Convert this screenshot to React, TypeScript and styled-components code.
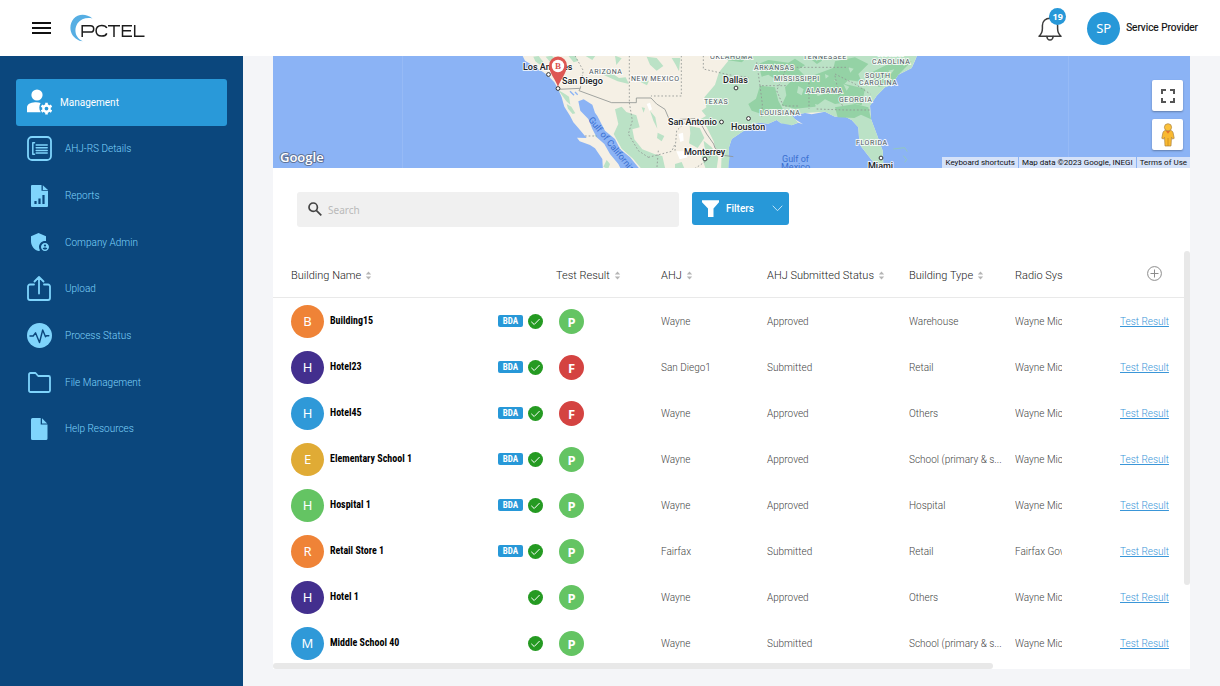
import React from 'react';
import styled, { createGlobalStyle } from 'styled-components';
import { MdAdminPanelSettings } from 'react-icons/md';

const sans = `Roboto, "Liberation Sans", sans-serif`;
const humanist = `"Noto Sans", "Open Sans", sans-serif`;
const narrow = `"Liberation Sans Narrow", "Roboto Condensed", "Liberation Sans", sans-serif`;

const GlobalStyle = createGlobalStyle`
  *, *::before, *::after { box-sizing: border-box; }
  body { margin: 0; background: #f4f5f8; font-family: ${sans}; font-size: 10px; color: #333; }
  button, input { font: inherit; }
  button { border: 0; padding: 0; cursor: pointer; background: none; color: inherit; }
`;

const Page = styled.div`
  display: flex;
  flex-direction: column;
  height: 100vh;
`;

/* ---------- header ---------- */

const Header = styled.header`
  flex: none;
  display: flex;
  align-items: center;
  height: 56px;
  padding: 0 22px 0 32px;
  background: #fff;
`;

const MenuButton = styled.button`
  display: flex;
  margin-right: 19px;
`;

const Logo = styled.a`
  display: flex;
  margin-right: auto;
`;

const BellButton = styled.button`
  position: relative;
  display: flex;
  margin-right: 25px;
`;

const Count = styled.span`
  position: absolute;
  top: -7px;
  right: -4px;
  width: 17px;
  height: 17px;
  border-radius: 50%;
  background: #2798d8;
  color: #fff;
  font: 700 9px/17px ${humanist};
  text-align: center;
`;

const Account = styled.button`
  display: flex;
  align-items: center;
  gap: 6px;
  color: #111;
  font: 400 10px/14px ${sans};
  -webkit-text-stroke: 0.2px #111;
`;

const Avatar = styled.span<{ $color: string }>`
  flex: none;
  width: 33px;
  height: 33px;
  border-radius: 50%;
  background: ${(p) => p.$color};
  color: #fff;
  font: 400 13px/33px ${humanist};
  text-align: center;
  -webkit-text-stroke: 0;
`;

/* ---------- sidebar ---------- */

const Body = styled.div`
  flex: 1;
  display: flex;
  min-height: 0;
`;

const Sidebar = styled.aside`
  flex: none;
  width: 243px;
  padding: 23px 16px;
  background: #0b477d;
`;

const Nav = styled.nav`
  display: grid;
  grid-auto-rows: 1fr;
  height: 373px;
`;

const NavItem = styled.a<{ $active?: boolean }>`
  display: flex;
  align-items: center;
  gap: ${(p) => (p.$active ? 8 : 13)}px;
  padding-left: 11px;
  border-radius: 3px;
  background: ${(p) => (p.$active ? '#2999d9' : 'transparent')};
  color: ${(p) => (p.$active ? '#fff' : '#7fd4fc')};
  font-size: 10px;
  font-weight: ${(p) => (p.$active ? 400 : 300)};
  text-decoration: none;
`;

const NavIcon = styled.span`
  display: flex;
  justify-content: center;
  width: 25px;
  color: ${'inherit'};
`;

/* ---------- content ---------- */

const Main = styled.main`
  flex: 1;
  min-width: 0;
  padding: 0 30px 17px;
`;

const Card = styled.section`
  display: flex;
  flex-direction: column;
  height: 100%;
  background: #fff;
`;

const MapBox = styled.div`
  flex: none;
  position: relative;
  height: 112px;
  overflow: hidden;
  background: #8bb3f5;
`;

const MapControls = styled.div`
  position: absolute;
  top: 24px;
  right: 7px;
  display: flex;
  flex-direction: column;
  gap: 8px;
`;

const MapButton = styled.button`
  display: flex;
  align-items: center;
  justify-content: center;
  width: 31px;
  height: 31px;
  border-radius: 2px;
  background: #fff;
  box-shadow: 0 1px 2px rgba(0, 0, 0, 0.3);
`;

const MapLegal = styled.div`
  position: absolute;
  right: 0;
  bottom: 0;
  display: flex;
  gap: 1px;
  height: 11px;
  color: #111;
  font: 400 8px/11px ${sans};
`;

const LegalText = styled.span`
  padding: 0 3px;
  background: #d5e2f9;
`;

const LegalButton = styled(LegalText).attrs({ as: 'button', type: 'button' })`
  line-height: 11px;
`;

const LegalLink = styled(LegalText).attrs({ as: 'a', href: '#terms' })`
  color: inherit;
  text-decoration: none;
`;

const Toolbar = styled.div`
  flex: none;
  display: flex;
  gap: 13px;
  height: 83px;
  padding: 24px 24px 0;
`;

const SearchBox = styled.label`
  flex: 0 1 382px;
  display: flex;
  align-items: center;
  gap: 6px;
  height: 35px;
  padding: 0 11px;
  border-radius: 3px;
  background: #f0f0f0;
`;

const SearchInput = styled.input`
  flex: 1;
  min-width: 0;
  border: 0;
  outline: 0;
  padding: 0;
  background: none;
  font: 400 10px/14px ${humanist};
  &::placeholder { color: #b9b9b9; opacity: 1; }
`;

const FilterButton = styled.button`
  display: flex;
  align-items: center;
  width: 97px;
  height: 33px;
  padding: 0 6px 0 10px;
  border-radius: 3px;
  background: #2798d8;
  color: #fff;
  font: 500 10px/14px ${sans};
`;

const FilterLabel = styled.span`
  flex: 1;
  padding-left: 7px;
  text-align: left;
`;

/* ---------- table ---------- */

const TableArea = styled.div`
  flex: 1;
  min-height: 0;
  display: grid;
  grid-template: minmax(0, 1fr) 6px / minmax(0, 1fr) 6px;
`;

const TableView = styled.div`
  overflow: hidden;
`;

const Thumb = styled.div`
  border-radius: 3px;
  background: #e8e8e8;
`;

const VThumb = styled(Thumb)`
  height: 81%;
`;

const HThumb = styled(Thumb)`
  width: 79%;
`;

const Table = styled.table`
  width: 100%;
  table-layout: fixed;
  border-spacing: 0;
`;

const Col = styled.col<{ $w?: number }>`
  width: ${(p) => (p.$w ? `${p.$w}px` : 'auto')};
`;

const Th = styled.th<{ $first?: boolean }>`
  height: 47px;
  padding: 2px 0 0 ${(p) => (p.$first ? 18 : 0)}px;
  border-bottom: 1px solid #e9e9e9;
  color: #222;
  font-size: 11px;
  font-weight: 300;
  text-align: left;
  white-space: nowrap;
`;

const SortButton = styled.button`
  display: flex;
  align-items: center;
  gap: 4px;
`;

const AddCell = styled.div`
  display: flex;
  padding-left: 27px;
`;

const Td = styled.td<{ $first?: boolean; $inset?: number; $clip?: number }>`
  height: 46px;
  padding: 0 ${(p) => p.$clip || 0}px 0 ${(p) => (p.$first ? 18 : p.$inset || 0)}px;
  color: #444;
  font-size: 10px;
  font-weight: 300;
  white-space: nowrap;
`;

const Clip = styled.div`
  overflow: hidden;
`;

const NameCell = styled.div`
  display: flex;
  align-items: center;
  padding-right: 13px;
`;

const BuildingName = styled.span`
  flex: 1;
  padding-left: 6px;
  color: #000;
  font: 700 10px/14px ${narrow};
`;

const Bda = styled.span`
  width: 25px;
  height: 12px;
  margin-right: 5px;
  border-radius: 2px;
  background: #2798d8;
  color: #fff;
  font: 700 9px/12px ${narrow};
  text-align: center;
`;

const Result = styled.span<{ $pass: boolean }>`
  display: block;
  width: 25px;
  height: 25px;
  border-radius: 50%;
  background: ${(p) => (p.$pass ? '#64c463' : '#d44341')};
  color: #fff;
  font: 700 13px/26px ${humanist};
  text-align: center;
`;

const ResultLink = styled.a`
  color: #3a96d8;
  text-decoration: underline;
`;

/* ---------- icons ---------- */

const svgLine = { fill: 'none', stroke: 'currentColor', strokeLinecap: 'round', strokeLinejoin: 'round' } as const;

const UserGearIcon = () => (
  <svg width="25" height="26" viewBox="0 0 25 26" fill="currentColor">
    <circle cx="10" cy="6" r="5.6" />
    <path d="M0 23.2v-4.4c0-3.4 3.2-5.3 8-5.5 2.200-.1 4 .1 5.600.6-1.600 2.700-1.900 6.300.2 9.300z" />
    <circle cx="19.500" cy="19.600" r="3.100" fill="none" stroke="currentColor" strokeWidth="2.400" />
    <path
      d="M19.500 13.800v2.200M19.500 23.200v2.200M14.500 16.700l1.900 1.100M22.600 21.400l1.900 1.100M14.500 22.500l1.900-1.100M22.600 17.800l1.900-1.100"
      stroke="currentColor"
      strokeWidth="2.600"
    />
  </svg>
);

const DetailsIcon = () => (
  <svg width="25" height="25" viewBox="0 0 25 25" {...svgLine} strokeWidth="1.800">
    <rect x="1" y="1" width="23" height="23" rx="4" />
    <path d="M7.500 6.700H5.800v11.500h1.700M9.200 9h11M9.200 11.700h11M9.200 14.400h11M9.200 17h11" strokeWidth="1.500" />
  </svg>
);

const ReportIcon = () => (
  <svg width="17" height="22" viewBox="0 0 17 22">
    <path d="M0 1a1 1 0 0 1 1-1h9.500v5.800H17V21a1 1 0 0 1-1 1H1a1 1 0 0 1-1-1z" fill="#7fd4fc" />
    <path d="M11.800.2 17 5h-5.200z" fill="#7fd4fc" />
    <path d="M4.500 19v-3M8.500 19v-5.500M12.500 19v-9" stroke="#0b477d" strokeWidth="2.200" />
  </svg>
);

const UploadIcon = () => (
  <svg width="25" height="25" viewBox="0 0 25 25" {...svgLine} strokeWidth="1.800">
    <path d="M7 8.500H3a2 2 0 0 0-2 2V22a2 2 0 0 0 2 2h18a2 2 0 0 0 2-2V10.500a2 2 0 0 0-2-2h-4M12 17.500V1.500M7.500 5.500 12 1l4.500 4.500" />
  </svg>
);

const PulseIcon = () => (
  <svg width="25" height="25" viewBox="0 0 25 25" fill="none">
    <circle cx="12.500" cy="12.500" r="12.500" fill="#7fd4fc" />
    <path
      d="M3 13h3.200l2.300-3.200 4 9.700 3.200-12.500 2.800 6.800 1-1h2.300"
      stroke="#0b477d"
      strokeWidth="1.400"
      strokeLinecap="round"
      strokeLinejoin="round"
    />
  </svg>
);

const FolderIcon = () => (
  <svg width="23" height="21" viewBox="0 0 23 21" {...svgLine} strokeWidth="1.800">
    <path d="M1 2.500A1.500 1.500 0 0 1 2.500 1h5L10.200 4h10.300A1.500 1.500 0 0 1 22 5.500v13a1.500 1.500 0 0 1-1.500 1.500h-18A1.500 1.500 0 0 1 1 18.500z" />
  </svg>
);

const FileIcon = () => (
  <svg width="17" height="22" viewBox="0 0 17 22" fill="currentColor">
    <path d="M0 1.500A1.500 1.500 0 0 1 1.500 0h8.200v6.500H16.500v14a1.500 1.500 0 0 1-1.500 1.500H1.500A1.500 1.500 0 0 1 0 20.500z" />
    <path d="M11 .2 16.200 5.500H11z" />
  </svg>
);

const MenuIcon = () => (
  <svg width="19" height="14" viewBox="0 0 19 14" stroke="#111" strokeWidth="2">
    <path d="M0 2h19M0 7h19M0 12h19" />
  </svg>
);

const PctelLogo = () => (
  <svg width="76" height="30" viewBox="0 0 76 30">
    <path d="M22.500 5.400C16 .2 8 .6 3.600 5.800-1.900 12.600-.6 23.500 9.500 27.700l3.200.6C5 24.400 3.600 16.600 7.600 10.300 11 5.600 16.500 4.200 22.500 5.400z" fill="#56aee3" />
    <g fill="none" stroke="#1c1c1c" strokeWidth="1.500">
      <path d="M12.200 24V12.700h8.200q3.300 0 3.300 3.200t-3.300 3.200h-8.200" />
      <path d="M36.800 15q-1.100-2.500-5-2.500-5.700 0-5.700 5.300t5.700 5.300q3.900 0 5-2.700" />
      <path d="M38 12.700h12M44 12.700V24M62 12.700h-9.500v10.500H62M52.500 17.800H61M64.700 12v11.200h9.800" />
    </g>
  </svg>
);

const BellIcon = () => (
  <svg width="24" height="26" viewBox="0 0 24 26" {...svgLine} stroke="#3c3c3c" strokeWidth="1.500">
    <path d="M1 21.200c2.600-2.200 3.400-4.200 3.400-7.700v-3C4.400 6.200 7.500 3.200 12 3.200s7.600 3 7.600 7.300v3c0 3.500.8 5.500 3.400 7.700z" />
    <path d="M12 3.200V1.200M8.800 21.500c.3 2.200 1.400 3.500 3.200 3.500s2.900-1.300 3.200-3.500" />
  </svg>
);

const SearchIcon = () => (
  <svg width="14" height="16" viewBox="0 0 14 16" fill="none" stroke="#444" strokeWidth="1.700">
    <circle cx="5.200" cy="5.200" r="4.200" />
    <path d="m8.300 8.300 5 5" />
  </svg>
);

const FunnelIcon = () => (
  <svg width="17" height="18" viewBox="0 0 17 18" fill="#fff">
    <path d="M0 .300h17v2L11.500 8.500v8.500H6V8.500L0 2.300z" />
  </svg>
);

const ChevronIcon = () => (
  <svg width="11" height="7" viewBox="0 0 11 7" {...svgLine} stroke="#bfe2f6">
    <path d="m1 1 4.500 4.700L10 1" />
  </svg>
);

const SortIcon = () => (
  <svg width="7" height="10" viewBox="0 0 7 10" fill="#b5b5b5">
    <path d="M3.500 1.500 6.200 4.500H.8zM.8 6.500h5.400L3.500 9.500z" />
  </svg>
);

const PlusIcon = () => (
  <svg width="15" height="15" viewBox="0 0 15 15" fill="none" stroke="#8c8c8c">
    <circle cx="7.500" cy="7.500" r="6.900" />
    <path d="M7.500 3.500v8M3.500 7.500h8" />
  </svg>
);

const CheckIcon = () => (
  <svg width="15" height="15" viewBox="0 0 15 15" role="img" aria-label="Verified">
    <circle cx="7.500" cy="7.500" r="7.500" fill="#259a22" />
    <path d="m3.300 7.800 2.900 2.700 5.400-5.500" fill="none" stroke="#fff" strokeWidth="1" />
  </svg>
);

const FullscreenIcon = () => (
  <svg width="14" height="14" viewBox="0 0 14 14" fill="none" stroke="#555" strokeWidth="2">
    <path d="M1 5V1h4M9 1h4v4M13 9v4H9M5 13H1V9" />
  </svg>
);

const PegmanIcon = () => (
  <svg width="14" height="24" viewBox="0 0 14 24">
    <path
      d="M4.600 7.500h4.800c1.600 0 2.400 1 2.800 2.600l1 5.200-1.700.8-1-1.800-.5 8.700H4l-.5-8.700-1 1.800-1.700-.8 1-5.200c.4-1.600 1.200-2.600 2.800-2.600z"
      fill="#f9b931"
      stroke="#a98446"
      strokeWidth=".7"
    />
    <path d="M7 15v8" stroke="#c98a1d" strokeWidth=".8" />
    <path d="m4.500 7.600 2.500 3.200 2.500-3.200z" fill="#e5702a" />
    <circle cx="7" cy="4.300" r="3.600" fill="#fbc13a" stroke="#a98446" strokeWidth=".7" />
  </svg>
);

/* ---------- map ---------- */

const MapSvg = styled.svg`
  display: block;
  width: 100%;
  height: 100%;
  font-family: ${sans};
`;

const Place = styled.text<{ $kind: 'city' | 'state' | 'water' }>`
  font-size: ${(p) => (p.$kind === 'state' ? 7 : 9)}px;
  font-weight: ${(p) => (p.$kind === 'city' ? 500 : 400)};
  letter-spacing: ${(p) => (p.$kind === 'state' ? '0.6px' : 'normal')};
  fill: ${(p) => (p.$kind === 'water' ? '#3a6fd0' : p.$kind === 'city' ? '#202124' : '#4d5660')};
  stroke: ${(p) => (p.$kind === 'water' ? 'none' : 'rgba(255,255,255,.8)')};
  stroke-width: 2px;
  paint-order: stroke;
`;

const GoogleMark = styled.text`
  font: 600 13px "Open Sans", sans-serif;
  fill: #fff;
  stroke: #5f7399;
  stroke-width: 2px;
  paint-order: stroke;
`;

const PinLetter = styled.text`
  font: 700 9px "Liberation Serif", serif;
  fill: #d9534f;
  text-anchor: middle;
`;

const cities: [string, number, number][] = [
  ['Los Angeles', 250, 14],
  ['San Diego', 289, 28],
  ['Dallas', 450, 27],
  ['San Antonio', 395, 69],
  ['Houston', 458, 74],
  ['Monterrey', 411, 99],
  ['Miami', 595, 113],
];

const states: [string, number, number][] = [
  ['ARIZONA', 316, 18],
  ['NEW MEXICO', 358, 25],
  ['OKLAHOMA', 437, 3],
  ['TENNESSEE', 530, 3],
  ['NORTH', 605, 0],
  ['CAROLINA', 599, 8],
  ['ARKANSAS', 481, 14],
  ['MISSISSIPPI', 501, 25],
  ['SOUTH', 592, 22],
  ['CAROLINA', 586, 29],
  ['ALABAMA', 533, 37],
  ['GEORGIA', 566, 46],
  ['TEXAS', 431, 48],
  ['LOUISIANA', 487, 59],
  ['FLORIDA', 583, 89],
];

const dots: [number, number][] = [
  [275.5, 18.5], [285, 32.5], [463, 32], [448.5, 66], [475.5, 62.5], [432, 103], [608, 102],
];

const LAND =
  'M20 0L30 20L60 38L85 55L100 66L118 85L128 103L140 130L148 158L165 185L175 205L190 222L205 240L215 252L186 251L194 262L225 273L240 283L262 315L264 350H640L640 310L642 280L650 255L680 235L700 222L712 210L735 206L760 209L785 198L798 208L815 206L830 214L850 206L864 211L838 194L830 184L870 177L890 181L930 173L960 188L985 185L1010 198L1030 220L1032 250L1040 280L1060 305L1075 325L1105 332L1103 290L1085 240L1068 195L1065 155L1085 125L1110 100L1130 92L1150 62L1190 42L1200 20L1208 0Z';
const GULF =
  'M190 142L196 170L220 195L232 225L245 250L268 270L285 300L310 330L320 350L378 350L345 310L315 285L300 255L270 230L247 186L240 176L232 152L206 136Z';
const EAST =
  'M618 0L640 20L612 55L600 92L590 104L568 130L574 160L560 170L573 186L556 196L575 220L596 262L600 280L620 300L640 310L642 280L650 255L680 235L700 222L712 210L735 206L760 209L785 198L798 208L830 214L850 206L830 184L870 177L930 173L960 188L985 185L1010 198L1030 220L1032 250L1040 280L1060 305L1075 325L1105 332L1103 290L1085 240L1068 195L1065 155L1085 125L1110 100L1130 92L1150 62L1190 42L1208 0Z';
const FOREST = [
  'M730 30l30-12 60 8 20-12 30 20-20 12 20 20-60-4-20 20-30-20-20 6z',
  'M735 95l45 5 10 40 16 30-40-6-26 10-20-30zM810 100l30-30-6-14 46 14 80-30 20 30-24 10 34 10 60 14-10 50-40-10-40 6-30-14-30 22-60 6-40-10 14-30z',
  'M700 150l30-20 30 10 10 30-30 10-30-10z',
  'M960 22l60-12 40 20-30 30 10 24-40-6-20 20-30-30z',
  'M1060 60l60-30 70-8-40 40-20 30-40 6-10-20z',
  'M960 160l60-10 40 10 8 36-30-14-20 10-50-2z',
  'M640 5l60 4-20 16-40-6zM880 10l50 4-24 16z',
];
const CLEARING = [
  'M850 96l16 10-6 18-14-8zM900 110l20-4 6 14-18 6zM985 90l18 8-8 12zM930 60l12 6-10 8zM1000 40l16 4-10 12zM1120 50l18-4-10 14zM900 150l14 4-10 8z',
];
const SCRUB = [
  'M55 8l16-2 14 18-10 8-14-10zM92 8l18-3 8 8-12 12z',
  'M130 108l10 14 14 20 12 10-4-24-12-8zM155 150l14 8 12 20-8 2-14-16z',
  'M160 5l20 0 10 16-14 4zM212 6l30-2-10 14zM262 48l20 4 30 20 20-2 10 20-34-8-40-18zM300 5l20 8-16 20z',
  'M395 8l30 4 20 24-20 14-20-18zM470 12l26 0-4 40-10-20zM372 82l30-2-6 14z',
  'M300 166l20-8 14 16 30 10 10 36-22 6 6 30 24 30 36 14 24 6 10 44h-68l-30-36-34-30-24-44 14-30z',
  'M380 160l10 2-4 14zM405 170l16 20 6 34-12-24zM428 236l20 10-8 16-14-10z',
  'M524 216l30 6 14 30-20 30-26-14 4-30zM566 260l24 20 20 30-6 40h-30l-14-40 10-20z',
  'M620 300l24 8-6 42h-20zM480 330l20-6 10 24h-30z',
  'M275 318l10 12-6 16-14-8zM238 245l8-6 4 14z',
];

const MapDrawing = () => (
  <MapSvg viewBox="0 0 917 112" preserveAspectRatio="xMidYMid slice" role="img" aria-label="Map of sites">
    <path d="M129.500 0v112M445.500 0v112M795.500 0v112" stroke="#9dbff7" strokeWidth=".6" />
    <g transform="translate(242 -2) scale(0.333333)">
      <path d={LAND} fill="#f5f0e5" />
      <path d={EAST} fill="#bbe2c6" />
      {FOREST.map((d) => (
        <path key={d} d={d} fill="#94d2a5" />
      ))}
      {[...SCRUB, ...CLEARING].map((d) => (
        <path key={d} d={d} fill="#bbe2c6" />
      ))}
      <path d="M395 150l10-4 6 20-8 4zM490 240l14-4 2 24-10 4zM484 292l24 0 10 18-24 6z" fill="#fff" />
      <path d={GULF} fill="#8bb3f5" />
      <path d="M1135 285l34-4 8 12M1165 305l10 12-6 8" fill="none" stroke="#94d2a5" strokeWidth="2" />
      <path d="M165 112l12 12M180 114l8 8" stroke="#8bb3f5" strokeWidth="4" />
      <g fill="none" stroke="#8f9491" strokeWidth="2.500">
        <path d="M130 106L196 103L192 110L290 146H364V132H408L425 150L450 166L460 190L468 208L495 196L540 194L560 214L575 240L596 270L600 282L625 304L655 308" />
        <path
          strokeDasharray="5 6"
          d="M180 5L205 50L200 75L196 103M343 5V146M499 5V126H408M343 146L352 200L340 240L370 290L400 310M565 5V45L640 62L700 70M725 25L735 95H815M735 95L742 150L740 190M815 40L785 110L805 156H850M882 75V165M960 65L975 140L985 160M905 165L990 168L1066 168M812 40H1000M960 60L1020 90L1066 120M210 246H245M480 290L485 230L520 196M400 310L470 292L480 270M530 350L575 320L600 290M430 290L425 350"
        />
      </g>
    </g>
    {states.map(([label, x, y]) => (
      <Place key={`${label}${y}`} $kind="state" x={x} y={y}>{label}</Place>
    ))}
    {cities.map(([label, x, y]) => (
      <Place key={label} $kind="city" x={x} y={y}>{label}</Place>
    ))}
    {dots.map(([x, y]) => (
      <circle key={x} cx={x} cy={y} r="1.900" fill="#fff" stroke="#333" strokeWidth="1" />
    ))}
    <Place $kind="water" x="509" y="106">Gulf of</Place>
    <Place $kind="water" x="508" y="114">Mexico</Place>
    <Place $kind="water" transform="translate(315 64) rotate(51)">Gulf of California</Place>
    <path d="M285 31C283 24 276 17 276 9.500a9 9 0 0 1 18 0C294 17 287 24 285 31z" fill="#de5753" />
    <circle cx="285" cy="10" r="6.200" fill="#fff" />
    <PinLetter x="285" y="13">B</PinLetter>
    <GoogleMark x="7" y="106">Google</GoogleMark>
  </MapSvg>
);

/* ---------- data ---------- */

const navItems = [
  { label: 'Management', icon: <UserGearIcon />, active: true },
  { label: 'AHJ-RS Details', icon: <DetailsIcon /> },
  { label: 'Reports', icon: <ReportIcon /> },
  { label: 'Company Admin', icon: <MdAdminPanelSettings size={24} /> },
  { label: 'Upload', icon: <UploadIcon /> },
  { label: 'Process Status', icon: <PulseIcon /> },
  { label: 'File Management', icon: <FolderIcon /> },
  { label: 'Help Resources', icon: <FileIcon /> },
];

const ORANGE = '#ef8337';
const PURPLE = '#432f8e';
const BLUE = '#2f99d8';
const GOLD = '#e0ab35';
const GREEN = '#64c463';

const buildings = [
  { name: 'Building15', color: ORANGE, bda: true, pass: true, ahj: 'Wayne', status: 'Approved', type: 'Warehouse', radio: 'Wayne Mic' },
  { name: 'Hotel23', color: PURPLE, bda: true, pass: false, ahj: 'San Diego1', status: 'Submitted', type: 'Retail', radio: 'Wayne Mic' },
  { name: 'Hotel45', color: BLUE, bda: true, pass: false, ahj: 'Wayne', status: 'Approved', type: 'Others', radio: 'Wayne Mic' },
  { name: 'Elementary School 1', color: GOLD, bda: true, pass: true, ahj: 'Wayne', status: 'Approved', type: 'School (primary & s...', radio: 'Wayne Mic' },
  { name: 'Hospital 1', color: GREEN, bda: true, pass: true, ahj: 'Wayne', status: 'Approved', type: 'Hospital', radio: 'Wayne Mic' },
  { name: 'Retail Store 1', color: ORANGE, bda: true, pass: true, ahj: 'Fairfax', status: 'Submitted', type: 'Retail', radio: 'Fairfax Gov' },
  { name: 'Hotel 1', color: PURPLE, bda: false, pass: true, ahj: 'Wayne', status: 'Approved', type: 'Others', radio: 'Wayne Mic' },
  { name: 'Middle School 40', color: BLUE, bda: false, pass: true, ahj: 'Wayne', status: 'Submitted', type: 'School (primary & s...', radio: 'Wayne Mic' },
];

const sortable = ['Building Name', 'Test Result', 'AHJ', 'AHJ Submitted Status', 'Building Type'];

export default function App() {
  return (
    <Page>
      <GlobalStyle />
      <Header>
        <MenuButton type="button" aria-label="Menu"><MenuIcon /></MenuButton>
        <Logo href="#home" aria-label="PCTEL"><PctelLogo /></Logo>
        <BellButton type="button" aria-label="Notifications">
          <BellIcon />
          <Count>19</Count>
        </BellButton>
        <Account type="button">
          <Avatar $color="#2798d8">SP</Avatar>
          Service Provider
        </Account>
      </Header>
      <Body>
        <Sidebar>
          <Nav>
            {navItems.map((item) => (
              <NavItem key={item.label} href="#" $active={item.active}>
                <NavIcon>{item.icon}</NavIcon>
                {item.label}
              </NavItem>
            ))}
          </Nav>
        </Sidebar>
        <Main>
          <Card>
            <MapBox>
              <MapDrawing />
              <MapControls>
                <MapButton type="button" aria-label="Toggle fullscreen"><FullscreenIcon /></MapButton>
                <MapButton type="button" aria-label="Street view"><PegmanIcon /></MapButton>
              </MapControls>
              <MapLegal>
                <LegalButton>Keyboard shortcuts</LegalButton>
                <LegalText>Map data ©2023 Google, INEGI</LegalText>
                <LegalLink>Terms of Use</LegalLink>
              </MapLegal>
            </MapBox>
            <Toolbar>
              <SearchBox>
                <SearchIcon />
                <SearchInput type="search" placeholder="Search" aria-label="Search" />
              </SearchBox>
              <FilterButton type="button">
                <FunnelIcon />
                <FilterLabel>Filters</FilterLabel>
                <ChevronIcon />
              </FilterButton>
            </Toolbar>
            <TableArea>
              <TableView>
                <Table>
                  <colgroup>
                    <Col />
                    <Col $w={105} />
                    <Col $w={106} />
                    <Col $w={142} />
                    <Col $w={106} />
                    <Col $w={105} />
                    <Col $w={64} />
                  </colgroup>
                  <thead>
                    <tr>
                      {sortable.map((label, i) => (
                        <Th key={label} scope="col" $first={i === 0}>
                          <SortButton type="button">{label}<SortIcon /></SortButton>
                        </Th>
                      ))}
                      <Th scope="col">Radio Sys</Th>
                      <Th scope="col">
                        <AddCell><button type="button" aria-label="Add column"><PlusIcon /></button></AddCell>
                      </Th>
                    </tr>
                  </thead>
                  <tbody>
                    {buildings.map((b) => (
                      <tr key={b.name}>
                        <Td $first>
                          <NameCell>
                            <Avatar $color={b.color}>{b.name[0]}</Avatar>
                            <BuildingName>{b.name}</BuildingName>
                            {b.bda && <Bda>BDA</Bda>}
                            <CheckIcon />
                          </NameCell>
                        </Td>
                        <Td $inset={3}><Result $pass={b.pass}>{b.pass ? 'P' : 'F'}</Result></Td>
                        <Td>{b.ahj}</Td>
                        <Td>{b.status}</Td>
                        <Td $clip={5}><Clip>{b.type}</Clip></Td>
                        <Td $clip={58}><Clip>{b.radio}</Clip></Td>
                        <Td><ResultLink href="#result">Test Result</ResultLink></Td>
                      </tr>
                    ))}
                  </tbody>
                </Table>
              </TableView>
              <VThumb />
              <HThumb />
            </TableArea>
          </Card>
        </Main>
      </Body>
    </Page>
  );
}
